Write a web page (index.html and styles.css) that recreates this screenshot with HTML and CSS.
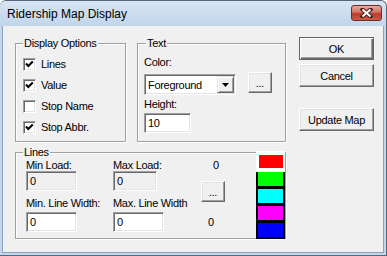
FILE: index.html
```html
<!DOCTYPE html>
<html>
<head lang="en">
    <meta charset="UTF-8">
    <title>Ridership Map Display</title>
    <link rel="stylesheet" href="styles.css">
</head>
<body>
<div class="window">
    <div class="titlebar">
        <span class="title">Ridership Map Display</span>
        <span class="close">
            <svg width="13" height="10" viewBox="0 0 13 10">
                <path d="M2.5 1.5 L10.5 8.5 M10.5 1.5 L2.5 8.5" stroke="#4a211b" stroke-width="4" stroke-linecap="square"/>
                <path d="M2.5 1.5 L10.5 8.5 M10.5 1.5 L2.5 8.5" stroke="#fff" stroke-width="2"/>
            </svg>
        </span>
    </div>
    <div class="client">
        <div class="groups">
            <div class="group-row">
                <fieldset class="group opts">
                    <legend>Display Options</legend>
                    <label class="check"><span class="box"><svg width="11" height="11" viewBox="0 0 11 11"><path d="M2 4.5 L4.3 7 L8.8 2.5" stroke="#000" stroke-width="2" fill="none"/></svg></span>Lines</label>
                    <label class="check"><span class="box"><svg width="11" height="11" viewBox="0 0 11 11"><path d="M2 4.5 L4.3 7 L8.8 2.5" stroke="#000" stroke-width="2" fill="none"/></svg></span>Value</label>
                    <label class="check"><span class="box"></span>Stop Name</label>
                    <label class="check"><span class="box"><svg width="11" height="11" viewBox="0 0 11 11"><path d="M2 4.5 L4.3 7 L8.8 2.5" stroke="#000" stroke-width="2" fill="none"/></svg></span>Stop Abbr.</label>
                </fieldset>
                <fieldset class="group text">
                    <legend>Text</legend>
                    <div class="label">Color:</div>
                    <div class="combo-row">
                        <div class="combo">
                            <span class="combo-value">Foreground</span>
                            <span class="drop"><svg width="7" height="4" viewBox="0 0 7 4"><polygon points="0,0 7,0 3.5,4" fill="#000"/></svg></span>
                        </div>
                        <button class="btn small">...</button>
                    </div>
                    <div class="label height-label">Height:</div>
                    <div class="edit height-edit">10</div>
                </fieldset>
            </div>
            <fieldset class="group lines">
                <legend>Lines</legend>
                <div class="lines-body">
                    <div class="col col1">
                        <div class="cap">Min Load:</div>
                        <div class="edit ro w51">0</div>
                        <div class="cap cap2">Min. Line Width:</div>
                        <div class="edit w51">0</div>
                    </div>
                    <div class="col col2">
                        <div class="cap">Max Load:</div>
                        <div class="edit ro w44">0</div>
                        <div class="cap cap2">Max. Line Width</div>
                        <div class="edit w51">0</div>
                    </div>
                    <div class="col col3">
                        <div class="cap val1">0</div>
                        <button class="btn small dots">...</button>
                        <div class="cap val2">0</div>
                    </div>
                    <div class="swatches">
                        <div class="swatch red"></div>
                        <div class="sel">
                            <div class="swatch green"></div>
                            <div class="swatch cyan"></div>
                            <div class="swatch magenta"></div>
                            <div class="swatch blue"></div>
                        </div>
                    </div>
                </div>
            </fieldset>
        </div>
        <div class="buttons">
            <button class="btn default">OK</button>
            <button class="btn cancel">Cancel</button>
            <button class="btn update">Update Map</button>
        </div>
    </div>
</div>
</body>
</html>
```
FILE: styles.css
```css
*{
    margin: 0;
    padding: 0;
    box-sizing: border-box;
}
body{
    font: 11px "Liberation Sans", Arial, sans-serif;
    letter-spacing: -0.3px;
    color: #000;
    background: #fff;
}
.window{
    width: 387px;
    height: 256px;
    display: flex;
    flex-direction: column;
    background: #c3d6eb;
    border: 1px solid #56687e;
    border-left: 0;
    border-radius: 6px 6px 0 0;
}
.titlebar{
    height: 25px;
    display: flex;
    justify-content: space-between;
    align-items: flex-start;
    padding: 0 4px 0 7px;
    background: linear-gradient(#d7e4f3, #c1d5eb);
    border-radius: 6px 6px 0 0;
}
.title{
    font-size: 12px;
    letter-spacing: 0;
    line-height: 25px;
    padding-top: 1px;
}
.close{
    width: 31px;
    height: 16px;
    margin-top: 4px;
    display: flex;
    align-items: center;
    justify-content: center;
    border: 1px solid #6b2d25;
    border-radius: 3px;
    background: linear-gradient(#e8aa9e, #d27060 45%, #b93b2c 55%, #cc5a44);
}
.client{
    flex: 1;
    display: flex;
    gap: 13px;
    margin: 0 2px 2px 2px;
    padding: 11px 0 0 12px;
    background: #f0f0f0;
    border: 1px solid #8fa4bc;
    border-top: 0;
}

/* group boxes */
.groups{
    width: 271px;
}
.group-row{
    display: flex;
    gap: 11px;
}
.group{
    border: 1px solid #a0a0a0;
    box-shadow: inset 1px 1px #fff, 1px 1px #fff;
    min-width: 0;
}
.group legend{
    padding: 0 1px;
    line-height: 13px;
    background: #f0f0f0;
}
.opts{
    width: 111px;
    height: 105px;
    padding: 8px 0 0 7px;
}
.text{
    width: 149px;
    height: 105px;
    padding: 6px 0 0 6px;
}
.text legend{
    margin-left: 2px;
}
.lines{
    width: 271px;
    height: 93px;
    margin-top: 4px;
    padding: 0 0 0 10px;
}
.lines legend{
    margin-left: -3px;
}

/* check boxes */
.check{
    display: flex;
    align-items: center;
    gap: 5px;
    height: 13px;
    line-height: 13px;
    margin-bottom: 8px;
}
.box{
    width: 13px;
    height: 13px;
    background: #fff;
    border: 1px solid;
    border-color: #a0a0a0 #fff #fff #a0a0a0;
    box-shadow: inset 1px 1px #696969, inset -1px -1px #e3e3e3;
}
.box svg{
    display: block;
}

/* edits and combo */
.label{
    line-height: 13px;
}
.height-label{
    margin-top: 3px;
}
.edit, .combo{
    height: 20px;
    background: #fff;
    border: 1px solid;
    border-color: #a0a0a0 #fff #fff #a0a0a0;
    box-shadow: inset 1px 1px #696969, inset -1px -1px #e3e3e3;
    padding: 0 3px;
    line-height: 18px;
}
.edit.ro{
    background: #f0f0f0;
}
.height-edit{
    width: 47px;
    margin-top: 2px;
}
.w51{
    width: 51px;
}
.w44{
    width: 44px;
}
.combo-row{
    display: flex;
    align-items: flex-start;
    gap: 12px;
    margin-top: 5px;
}
.combo{
    width: 92px;
    height: 21px;
    display: flex;
    align-items: center;
    justify-content: space-between;
    padding: 1px 1px 1px 3px;
}
.drop{
    width: 17px;
    height: 17px;
    display: flex;
    align-items: center;
    justify-content: center;
    background: #f0f0f0;
    border: 1px solid;
    border-color: #e3e3e3 #696969 #696969 #e3e3e3;
    box-shadow: inset 1px 1px #fff, inset -1px -1px #a0a0a0;
}
.drop svg{
    display: block;
}

/* buttons */
.btn{
    font: inherit;
    letter-spacing: inherit;
    color: #000;
    background: #f0f0f0;
    border: 1px solid;
    border-color: #fff #696969 #696969 #fff;
    box-shadow: inset -1px -1px #a0a0a0, inset 1px 1px #e3e3e3;
}
.btn.default{
    border-color: #646464;
    box-shadow: inset 1px 1px #fff, inset -1px -1px #696969, inset -2px -2px #a0a0a0;
}
.small{
    width: 24px;
    height: 21px;
    margin-top: -2px;
}
.buttons{
    width: 75px;
    display: flex;
    flex-direction: column;
}
.buttons .btn{
    height: 23px;
}
.cancel{
    margin-top: 4px;
}
.update{
    margin-top: 21px;
}

/* lines group */
.lines-body{
    display: flex;
}
.col{
    display: flex;
    flex-direction: column;
}
.col1{
    width: 87px;
}
.col2{
    width: 88px;
}
.col3{
    width: 24px;
}
.cap{
    height: 12px;
    line-height: 12px;
    white-space: nowrap;
}
.cap2{
    margin: 6px 0 3px;
}
.val1{
    padding-left: 12px;
}
.col3 .dots{
    margin-top: 10px;
}
.val2{
    margin-top: 14px;
    padding-left: 7px;
}
.swatches{
    width: 29px;
    height: 87px;
    margin: -8px 0 0 auto;
    background: #fff;
}
.swatch{
    width: 24px;
    height: 13px;
    margin: 4px 0 0 3px;
}
.sel{
    margin-top: 4px;
    padding: 0 2px 2px;
    background: #000;
}
.sel .swatch{
    width: 25px;
    height: 14px;
    margin: 3px 0 0 0;
}
.red{
    background: #f00;
}
.green{
    background: #0f0;
}
.cyan{
    background: #0ff;
}
.magenta{
    background: #f0f;
}
.blue{
    background: #00f;
}
```
